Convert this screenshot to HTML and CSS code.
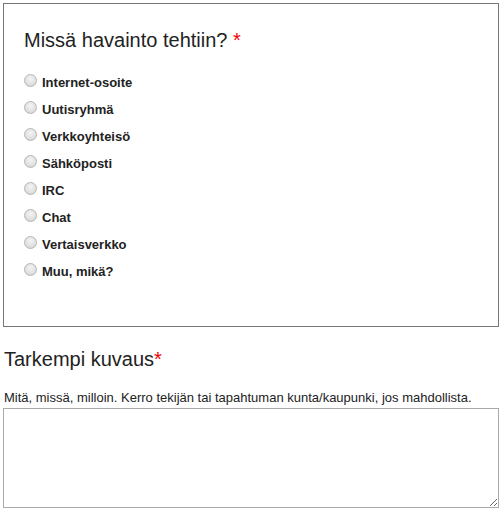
FILE: index.html
```html
<!DOCTYPE html>
<html lang="fi">
<head>
<meta charset="utf-8">
<link rel="stylesheet" href="styles.css">
</head>
<body>
<div class="page">
  <div class="question">
    <h2 class="q-title">Missä havainto tehtiin? <span class="req">*</span></h2>
    <ul class="options">
      <li class="option"><span class="radio"></span><span class="opt-label">Internet-osoite</span></li>
      <li class="option"><span class="radio"></span><span class="opt-label">Uutisryhmä</span></li>
      <li class="option"><span class="radio"></span><span class="opt-label">Verkkoyhteisö</span></li>
      <li class="option"><span class="radio"></span><span class="opt-label">Sähköposti</span></li>
      <li class="option"><span class="radio"></span><span class="opt-label">IRC</span></li>
      <li class="option"><span class="radio"></span><span class="opt-label">Chat</span></li>
      <li class="option"><span class="radio"></span><span class="opt-label">Vertaisverkko</span></li>
      <li class="option"><span class="radio"></span><span class="opt-label">Muu, mikä?</span></li>
    </ul>
  </div>
  <div class="detail">
    <h2 class="d-title">Tarkempi kuvaus<span class="req">*</span></h2>
    <p class="hint">Mitä, missä, milloin. Kerro tekijän tai tapahtuman kunta/kaupunki, jos mahdollista.</p>
    <textarea class="desc"></textarea>
  </div>
</div>
</body>
</html>
```
FILE: styles.css
```css
html, body {
  margin: 0;
  padding: 0;
  background: #fff;
}
body {
  font-family: "Liberation Sans", Arial, sans-serif;
  color: #222;
}
.page {
  padding: 3px;
}
.question {
  box-sizing: border-box;
  height: 324px;
  border: 1px solid #777;
  padding: 24px 20px 0 20px;
}
.q-title {
  margin: 0;
  font-size: 20px;
  font-weight: normal;
  line-height: 24px;
  color: #222;
}
.req {
  color: #e00;
}
.options {
  list-style: none;
  margin: 17px 0 0 0;
  padding: 0;
}
.option {
  display: flex;
  align-items: center;
  height: 27px;
}
.radio {
  box-sizing: border-box;
  width: 13px;
  height: 13px;
  border-radius: 50%;
  border: 1px solid #b5b5b5;
  background: radial-gradient(circle at 50% 35%, #f4f4f4 0%, #e2e2e2 55%, #cfcfcf 100%);
  margin: -4px 5px 0 0;
  flex: none;
}
.opt-label {
  font-size: 13px;
  font-weight: bold;
  color: #222;
}
.detail {
  padding-top: 20px;
}
.d-title {
  margin: 0 0 0 1px;
  font-size: 20px;
  font-weight: normal;
  line-height: 24px;
}
.hint {
  margin: 19px 0 2px 1px;
  font-size: 13px;
  line-height: 16px;
}
.desc {
  display: block;
  box-sizing: border-box;
  width: 496px;
  height: 100px;
  margin: 0;
  border: 1px solid #aaa;
  resize: both;
  font-family: "Liberation Sans", Arial, sans-serif;
}
```
